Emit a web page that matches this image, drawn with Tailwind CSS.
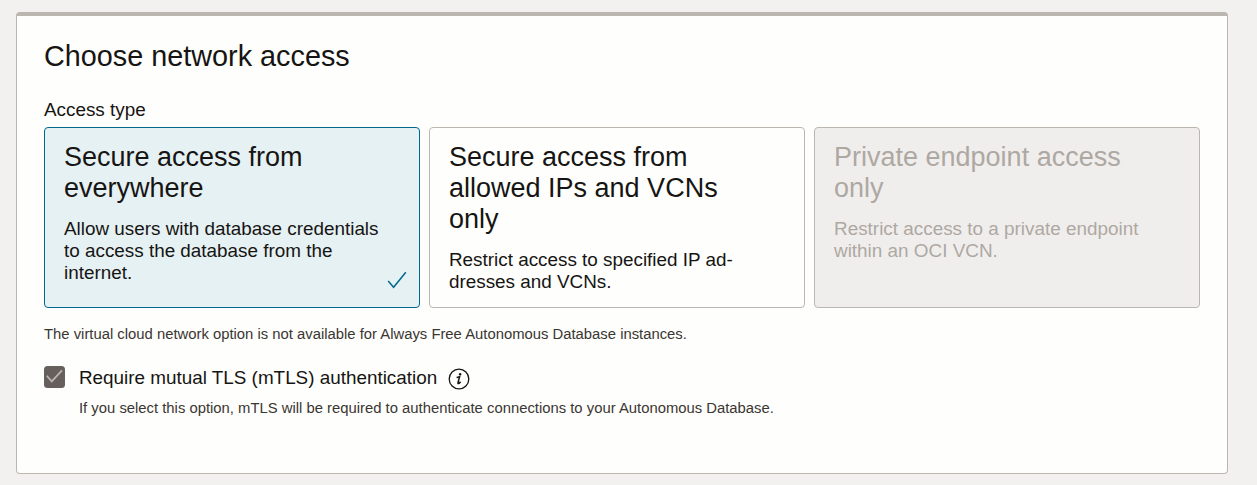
<!DOCTYPE html>
<html lang="en"><head><meta charset="utf-8"><title>Network access</title>
<script src="https://cdn.jsdelivr.net/npm/@tailwindcss/browser@4"></script></head>
<body class="bg-[#f3f1f0] font-['Liberation_Sans',Arial,sans-serif] text-[#161513] h-[485px] overflow-hidden pt-3 pl-4">
<main class="w-[1212px] h-[462px] bg-[#fefefc] border border-t-4 border-[#bcb6b1] rounded-[4px] pl-[27px] pr-[27px] pt-[22px]">
<h1 class="text-[28.8px] leading-[36px] whitespace-nowrap">Choose network access</h1>
<div class="mt-[24px] text-[18.88px] leading-[24px]">Access type</div>
<div class="flex mt-[5px] gap-[9px] h-[181px]">
<section class="relative w-[376px] bg-[#e6f1f4] border border-[#00688c] rounded-[4px] px-[19px] pt-[14px]">
<h2 class="text-[27px] leading-[31px] whitespace-nowrap">Secure access from<br>everywhere</h2>
<p class="mt-[14px] text-[18.88px] leading-[22px] whitespace-nowrap">Allow users with database credentials<br>to access the database from the<br>internet.</p>
<svg class="absolute right-[12px] bottom-[17px]" width="20" height="19" viewBox="0 0 20 19" fill="none" stroke="#00688c" stroke-width="1.5"><path d="M1.2 10 6.6 16.3 18.8 1.2"/></svg>
</section>
<section class="w-[376px] border border-[#bcb6b1] rounded-[4px] px-[19px] pt-[14px]">
<h2 class="text-[27px] leading-[31px] whitespace-nowrap">Secure access from<br>allowed IPs and VCNs<br>only</h2>
<p class="mt-[14px] text-[18.88px] leading-[22px] whitespace-nowrap">Restrict access to specified IP ad-<br>dresses and VCNs.</p>
</section>
<section class="w-[386px] bg-[#f0eeed] border border-[#bcb6b1] text-[#aea8a2] rounded-[4px] px-[19px] pt-[14px]">
<h2 class="text-[27px] leading-[31px] whitespace-nowrap">Private endpoint access<br>only</h2>
<p class="mt-[14px] text-[18.9px] leading-[22px] whitespace-nowrap">Restrict access to a private endpoint<br>within an OCI VCN.</p>
</section>
</div>
<p class="mt-[16px] text-[14.84px] leading-[20px] text-[#3a3632]">The virtual cloud network option is not available for Always Free Autonomous Database instances.</p>
<div class="flex items-start mt-[22px] h-[24px]">
<svg width="21" height="22" viewBox="0 0 21 22" fill="none"><rect width="21" height="22" rx="3.5" fill="#665f5b"/><path d="M2.8 9.8 7.7 15.4 18 4.3" stroke="#bcb6b1" stroke-width="1.7"/></svg>
<span class="ml-[14px] text-[18.88px] leading-[24px]">Require mutual TLS (mTLS) authentication</span>
<svg class="ml-[10.7px] mt-[1.5px]" width="22" height="22" viewBox="0 0 22 22" fill="none" stroke="#161513" stroke-width="1.3"><circle cx="11" cy="11" r="9.8"/><path d="M8.6 9.6c1.1-.1 2-.4 3-.8L10 14.6c-.4 1.5.9 1.3 2.6-.9" stroke-width="1.5"/><circle cx="12.1" cy="6.2" r="1.2" fill="#161513" stroke="none"/></svg>
</div>
<p class="ml-[35px] mt-[8px] text-[14.84px] leading-[20px] text-[#3a3632]">If you select this option, mTLS will be required to authenticate connections to your Autonomous Database.</p>
</main></body></html>
